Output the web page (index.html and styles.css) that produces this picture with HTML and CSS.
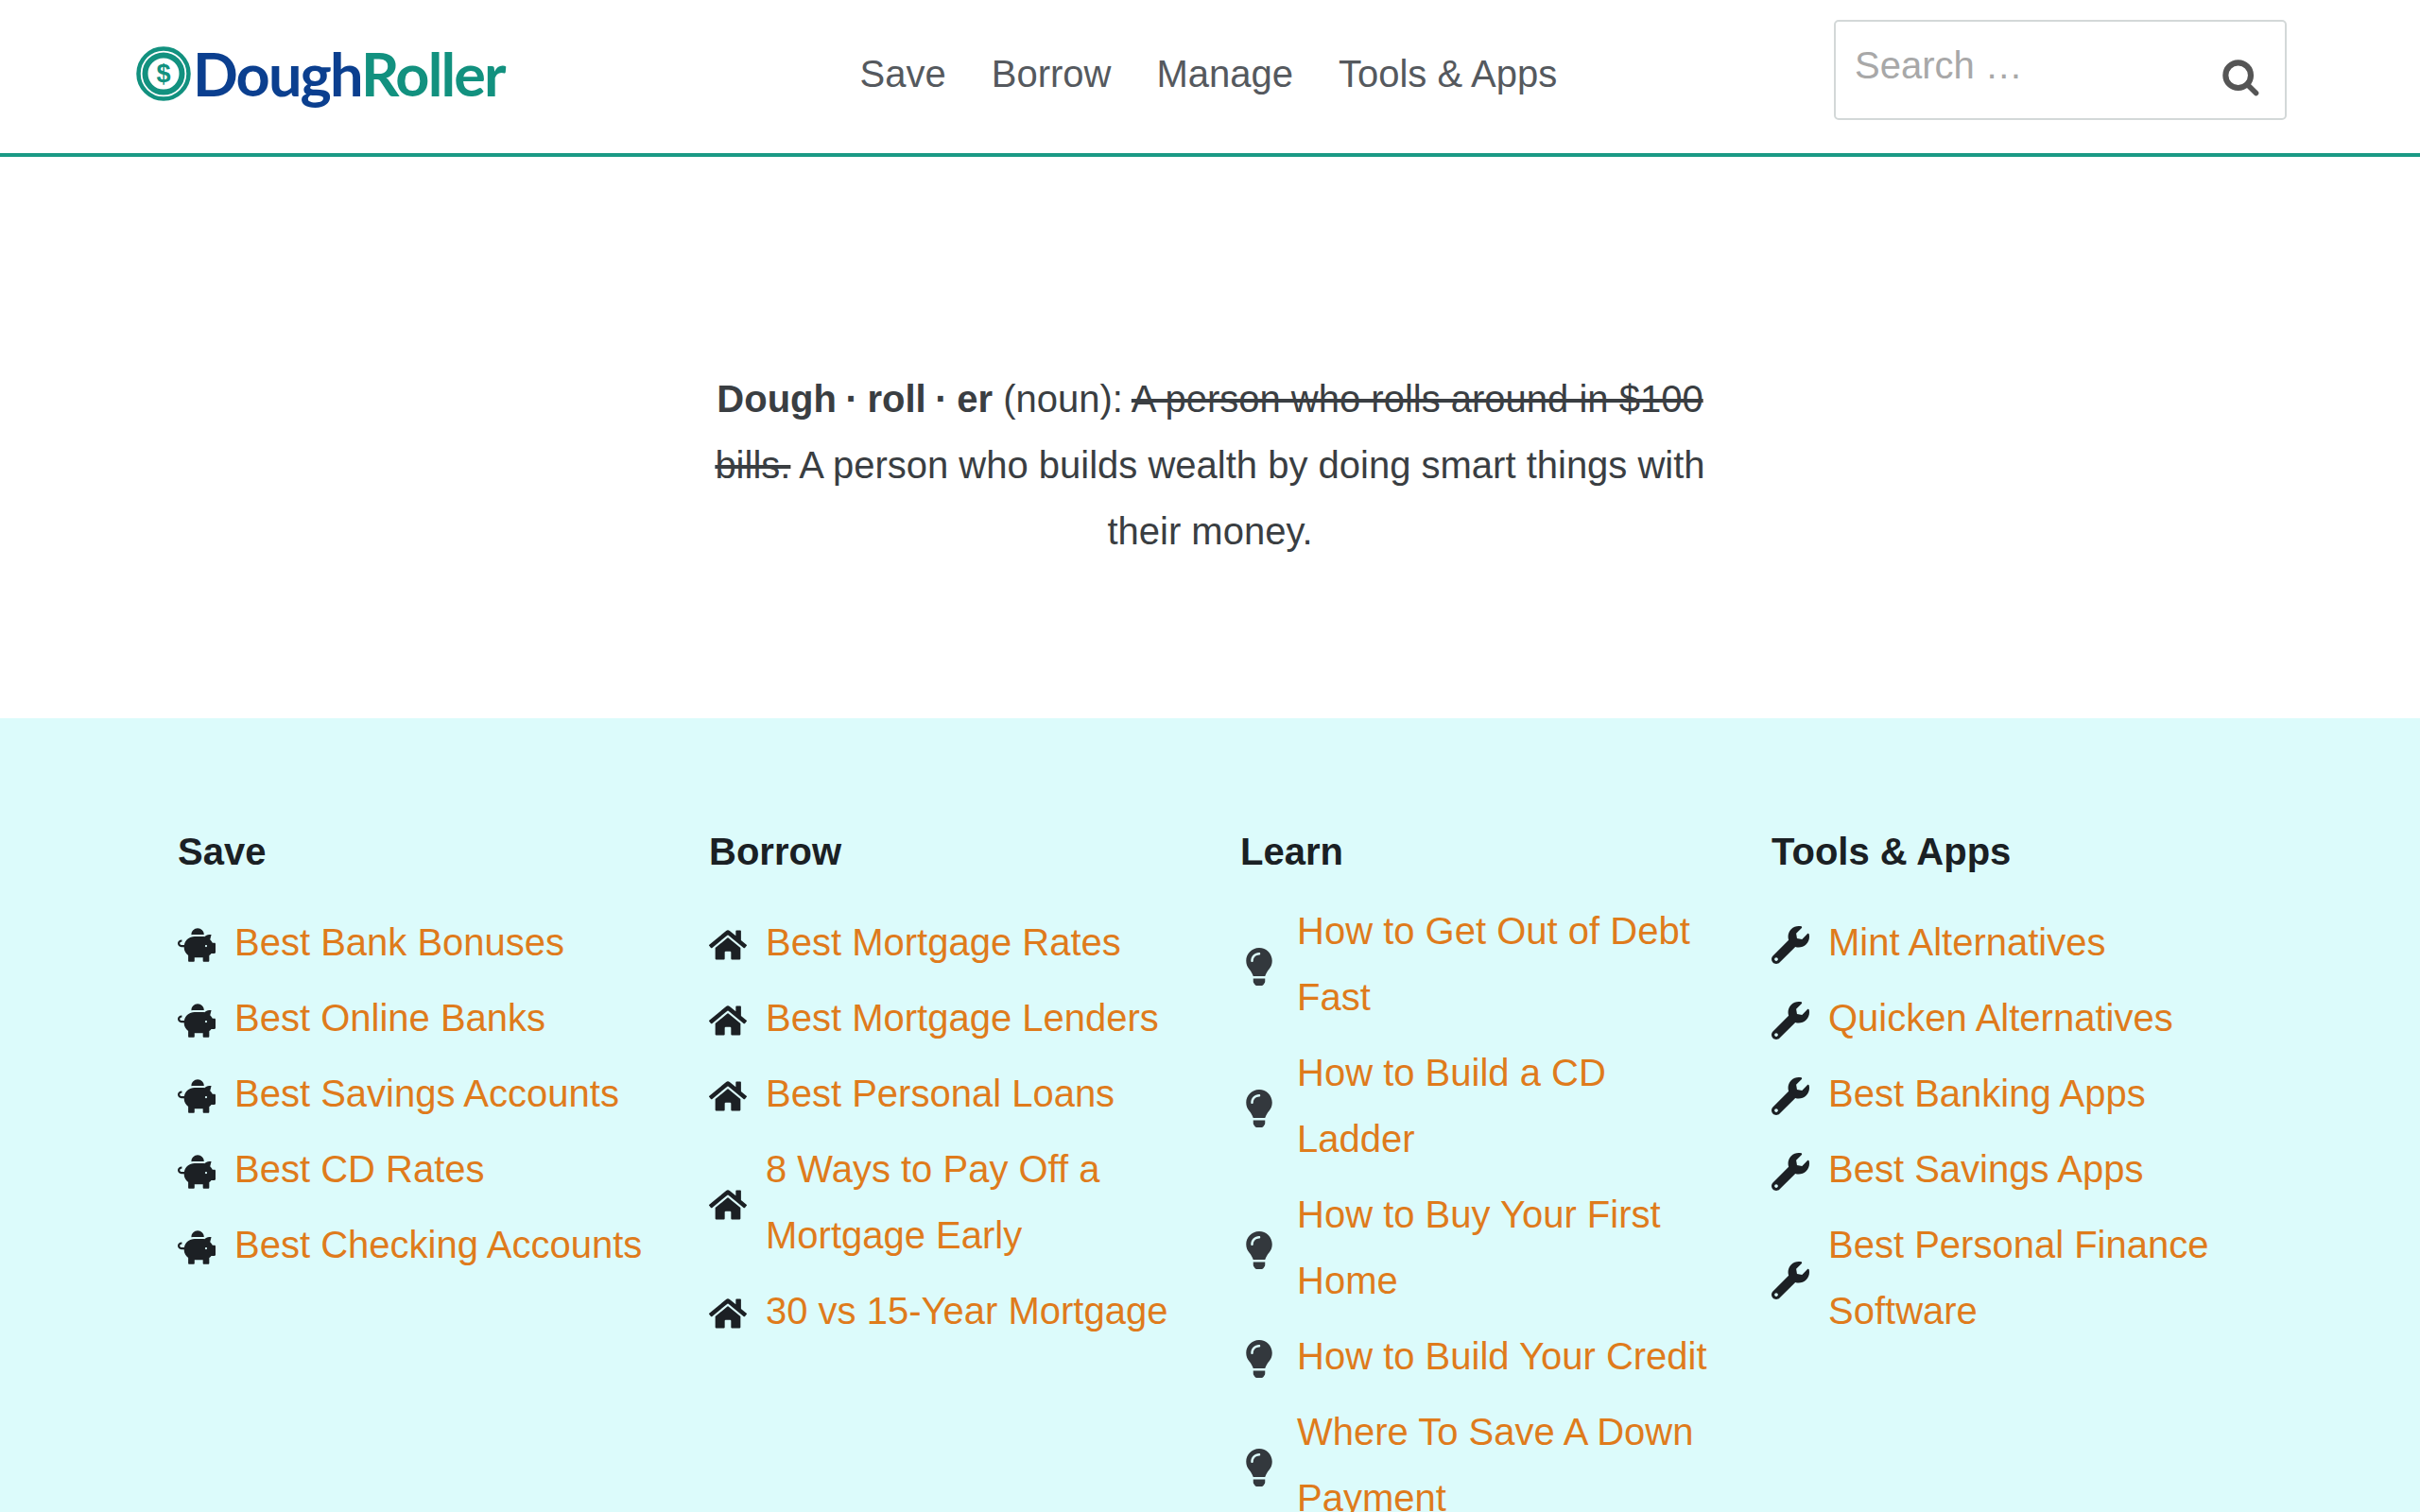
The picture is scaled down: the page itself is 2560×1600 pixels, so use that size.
FILE: index.html
```html
<!DOCTYPE html>
<html lang="en">
<head>
<meta charset="utf-8">
<title>DoughRoller</title>
<link rel="stylesheet" href="styles.css">
</head>
<body>
<svg class="defs" aria-hidden="true">
  <symbol id="i-piggy" viewBox="0 0 576 512"><path d="M560 224h-29.5c-8.8-20-21.6-37.7-37.4-52.5L512 96h-32c-29.4 0-55.4 13.5-73 34.3-7.6-1.1-15.1-2.3-23-2.3H256c-77.4 0-141.9 55-156.8 128H56c-14.8 0-26.5-13.5-23.5-28.8C34.7 215.8 45.4 208 57 208h1c3.3 0 6-2.7 6-6v-20c0-3.3-2.7-6-6-6-28.5 0-53.9 20.4-57.5 48.6C-3.9 258.8 22.7 288 56 288h40c0 52.2 25.4 98.1 64 127.3V496c0 8.8 7.2 16 16 16h64c8.8 0 16-7.2 16-16v-48h128v48c0 8.8 7.2 16 16 16h64c8.8 0 16-7.2 16-16v-80.7c11.8-8.9 22.3-19.4 31.3-31.3H560c8.8 0 16-7.2 16-16V240c0-8.8-7.2-16-16-16zm-128 64c-8.8 0-16-7.2-16-16s7.2-16 16-16 16 7.2 16 16-7.2 16-16 16zM256 96h128c5.4 0 10.7.4 15.9.8 0-.3.1-.5.1-.8 0-53-43-96-96-96s-96 43-96 96c0 2.1.5 4.1.6 6.2 15.2-3.9 31-6.2 47.4-6.2z"/></symbol>
  <symbol id="i-home" viewBox="0 0 576 512"><path d="M280.37 148.26L96 300.11V464a16 16 0 0 0 16 16l112.06-.29a16 16 0 0 0 15.92-16V368a16 16 0 0 1 16-16h64a16 16 0 0 1 16 16v95.64a16 16 0 0 0 16 16.05L464 480a16 16 0 0 0 16-16V300L295.67 148.26a12.19 12.19 0 0 0-15.3 0zM571.6 251.47L488 182.56V44.05a12 12 0 0 0-12-12h-56a12 12 0 0 0-12 12v72.61L318.47 43a48 48 0 0 0-61 0L4.34 251.47a12 12 0 0 0-1.6 16.9l25.5 31A12 12 0 0 0 45.15 301l235.22-193.74a12.19 12.19 0 0 1 15.3 0L530.9 301a12 12 0 0 0 16.9-1.6l25.5-31a12 12 0 0 0-1.7-16.93z"/></symbol>
  <symbol id="i-bulb" viewBox="0 0 352 512"><path d="M96.06 454.35c.01 6.29 1.87 12.45 5.36 17.69l17.09 25.69a31.99 31.99 0 0 0 26.64 14.28h61.71a31.99 31.99 0 0 0 26.64-14.28l17.09-25.69a31.989 31.989 0 0 0 5.36-17.69l.04-38.35H96.01l.05 38.35zM0 176c0 44.37 16.45 84.85 43.56 115.78 16.52 18.85 42.36 58.23 52.21 91.45.04.26.07.52.11.78h160.24c.04-.26.07-.51.11-.78 9.85-33.22 35.69-72.6 52.21-91.45C335.55 260.85 352 220.37 352 176 352 78.61 272.91-.3 175.45 0 73.44.31 0 82.97 0 176zm176-80c-44.11 0-80 35.89-80 80 0 8.84-7.16 16-16 16s-16-7.16-16-16c0-61.76 50.24-112 112-112 8.84 0 16 7.16 16 16s-7.16 16-16 16z"/></symbol>
  <symbol id="i-wrench" viewBox="0 0 512 512"><path d="M507.73 109.1c-2.24-9.03-13.54-12.09-20.12-5.51l-74.36 74.36-67.88-11.31-11.31-67.88 74.36-74.36c6.62-6.62 3.43-17.9-5.66-20.16-47.38-11.74-99.55.91-136.58 37.93-39.64 39.64-50.55 97.1-34.05 147.2L18.74 402.76c-24.99 24.99-24.99 65.51 0 90.5 24.99 24.99 65.51 24.99 90.5 0l213.21-213.21c50.12 16.71 107.47 5.68 147.37-34.22 37.07-37.07 49.7-89.32 37.91-136.73zM64 472c-13.25 0-24-10.75-24-24 0-13.26 10.75-24 24-24s24 10.74 24 24c0 13.25-10.75 24-24 24z"/></symbol>
</svg>

<header class="site-header">
  <a class="logo" href="#">
    <svg class="logo-mark" viewBox="0 0 58 58" aria-hidden="true">
      <circle cx="29" cy="29" r="26.5" fill="none" stroke="#12917f" stroke-width="4.5"/>
      <circle cx="29" cy="29" r="19.5" fill="none" stroke="#12917f" stroke-width="6"/>
      <text x="29" y="38" text-anchor="middle" class="logo-dollar">$</text>
    </svg>
    <span class="logo-text"><span class="logo-blue">Dough</span><span class="logo-teal">Roller</span></span>
  </a>
  <nav class="main-nav">
    <a href="#">Save</a>
    <a href="#">Borrow</a>
    <a href="#">Manage</a>
    <a href="#">Tools &amp; Apps</a>
  </nav>
  <form class="search">
    <input class="search-input" type="text" placeholder="Search …">
    <svg class="search-icon" viewBox="0 0 36 36" aria-hidden="true">
      <circle cx="15" cy="15" r="12" fill="none" stroke="#555" stroke-width="5.5"/>
      <line x1="24" y1="24" x2="32" y2="32" stroke="#555" stroke-width="5" stroke-linecap="round"/>
    </svg>
  </form>
</header>

<section class="hero">
  <p class="hero-text"><strong>Dough · roll · er</strong> (noun): <s>A person who rolls around in $100 bills.</s> A person who builds wealth by doing smart things with their money.</p>
</section>

<footer class="link-section">
  <div class="link-col">
    <h2>Save</h2>
    <ul>
      <li><svg class="icon"><use href="#i-piggy"/></svg><a href="#">Best Bank Bonuses</a></li>
      <li><svg class="icon"><use href="#i-piggy"/></svg><a href="#">Best Online Banks</a></li>
      <li><svg class="icon"><use href="#i-piggy"/></svg><a href="#">Best Savings Accounts</a></li>
      <li><svg class="icon"><use href="#i-piggy"/></svg><a href="#">Best CD Rates</a></li>
      <li><svg class="icon"><use href="#i-piggy"/></svg><a href="#">Best Checking Accounts</a></li>
    </ul>
  </div>
  <div class="link-col">
    <h2>Borrow</h2>
    <ul>
      <li><svg class="icon"><use href="#i-home"/></svg><a href="#">Best Mortgage Rates</a></li>
      <li><svg class="icon"><use href="#i-home"/></svg><a href="#">Best Mortgage Lenders</a></li>
      <li><svg class="icon"><use href="#i-home"/></svg><a href="#">Best Personal Loans</a></li>
      <li><svg class="icon"><use href="#i-home"/></svg><a href="#">8 Ways to Pay Off a Mortgage Early</a></li>
      <li><svg class="icon"><use href="#i-home"/></svg><a href="#">30 vs 15-Year Mortgage</a></li>
    </ul>
  </div>
  <div class="link-col link-col-tight">
    <h2>Learn</h2>
    <ul>
      <li><svg class="icon icon-bulb"><use href="#i-bulb"/></svg><a href="#">How to Get Out of Debt Fast</a></li>
      <li><svg class="icon icon-bulb"><use href="#i-bulb"/></svg><a href="#">How to Build a CD Ladder</a></li>
      <li><svg class="icon icon-bulb"><use href="#i-bulb"/></svg><a href="#">How to Buy Your First Home</a></li>
      <li><svg class="icon icon-bulb"><use href="#i-bulb"/></svg><a href="#">How to Build Your Credit</a></li>
      <li><svg class="icon icon-bulb"><use href="#i-bulb"/></svg><a href="#">Where To Save A Down Payment</a></li>
    </ul>
  </div>
  <div class="link-col">
    <h2>Tools &amp; Apps</h2>
    <ul>
      <li><svg class="icon"><use href="#i-wrench"/></svg><a href="#">Mint Alternatives</a></li>
      <li><svg class="icon"><use href="#i-wrench"/></svg><a href="#">Quicken Alternatives</a></li>
      <li><svg class="icon"><use href="#i-wrench"/></svg><a href="#">Best Banking Apps</a></li>
      <li><svg class="icon"><use href="#i-wrench"/></svg><a href="#">Best Savings Apps</a></li>
      <li><svg class="icon"><use href="#i-wrench"/></svg><a href="#">Best Personal Finance Software</a></li>
    </ul>
  </div>
</footer>
</body>
</html>
```

FILE: styles.css
```css
* { box-sizing: border-box; }
html, body { margin: 0; padding: 0; height: 1600px; overflow: hidden; }
body {
  display: flex;
  flex-direction: column;
  font-family: "Liberation Sans", Arial, sans-serif;
  font-size: 40px;
  line-height: 70px;
  color: #3a3e42;
  background: #fff;
}
a { text-decoration: none; color: inherit; }
.defs { display: none; }

.site-header {
  flex: none;
  display: flex;
  align-items: center;
  height: 166px;
  padding: 0 141px 6px 144px;
  border-bottom: 4px solid #1a9a85;
}
.logo { display: flex; align-items: center; gap: 2px; flex: none; }
.logo-mark { width: 58px; height: 58px; flex: none; }
.logo-dollar { font-family: "Liberation Sans", sans-serif; font-size: 27px; font-weight: 700; fill: #12917f; }
.logo-text {
  font-family: Lato, "Open Sans", sans-serif;
  font-size: 63px;
  font-weight: 700;
  line-height: 70px;
  letter-spacing: -1.9px;
}
.logo-blue { color: #0b3f8f; }
.logo-teal { color: #12917f; }
.main-nav { display: flex; gap: 48px; margin-left: 376px; color: #55595e; }
.search {
  position: relative;
  margin-left: auto;
  margin-bottom: 8px;
  width: 479px;
  height: 106px;
}
.search-input {
  display: block;
  width: 100%;
  height: 100%;
  padding: 0 20px 9px;
  border: 2px solid #d3d8d8;
  border-radius: 5px;
  background: #fff;
  font: 40px "Liberation Sans", Arial, sans-serif;
  color: #3a3e42;
  outline: none;
}
.search-input::placeholder { color: #a8a8a8; opacity: 1; }
.search-icon { position: absolute; right: 28px; top: 42px; width: 40px; height: 40px; }

.hero { flex: none; height: 594px; padding-top: 221px; }
.hero-text { width: 1100px; margin: 0 auto; text-align: center; }
.hero-text strong { font-weight: 700; color: #3a3e42; word-spacing: -1.5px; }

.link-section {
  flex: 1;
  display: grid;
  grid-template-columns: repeat(4, 500px);
  column-gap: 62px;
  padding: 106px 0 0 188px;
  background: #dcfbfb;
}
.link-col h2 { margin: 0; font-size: 40px; line-height: 70px; font-weight: 700; color: #1a2024; }
.link-col ul { list-style: none; margin: 26px 0 0; padding: 0; display: flex; flex-direction: column; gap: 10px; }
.link-col-tight ul { margin-top: 14px; }
.link-col li { display: flex; align-items: center; gap: 20px; }
.link-col li a { color: #df7b1c; }
.icon { flex: none; width: 40px; height: 40px; margin-top: 5px; fill: #1c2024; }
.icon-bulb { fill: #33383d; }
```
